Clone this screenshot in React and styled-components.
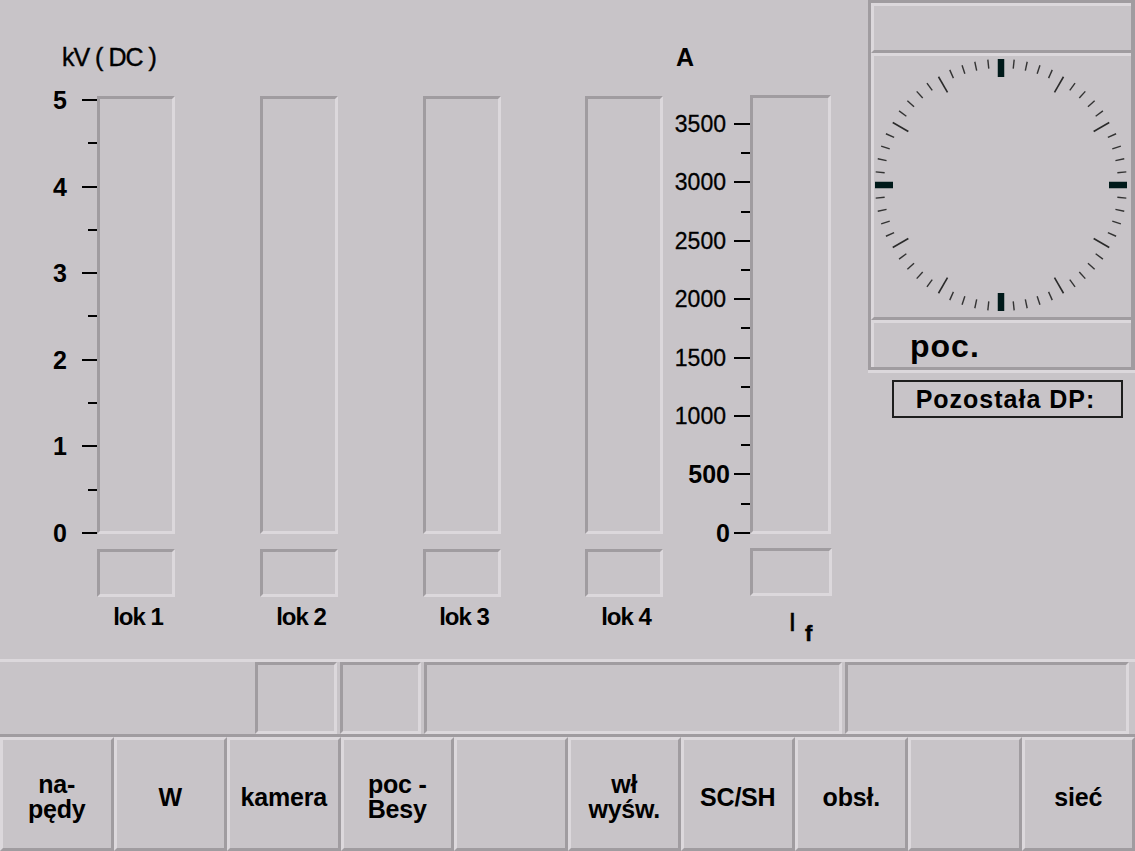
import React from "react";
import styled, { createGlobalStyle } from "styled-components";

const BG = "#c8c4c8";
const DARK = "#a09ca0";
const LIGHT = "#dcd8dc";

const Global = createGlobalStyle`
  html, body { margin: 0; padding: 0; background: ${BG}; overflow: hidden; }
  body { font-family: "Liberation Sans", Arial, sans-serif; color: #000; }
  * { box-sizing: border-box; }
`;

const Screen = styled.div`
  width: 1135px;
  height: 851px;
  display: flex;
  flex-direction: column;
  background: ${BG};
`;

const Top = styled.div`
  display: flex;
  height: 659px;
`;

const Charts = styled.div`
  width: 868px;
  padding-top: 44px;
  display: flex;
  flex-direction: column;
`;

const HeaderRow = styled.div`
  display: flex;
  height: 51px;
  padding-left: 62px;
`;

const UnitLabel = styled.div`
  width: ${(p) => p.$width || "auto"};
  font-size: 25px;
  line-height: 26px;
  font-weight: ${(p) => (p.$bold ? 700 : 400)};
  letter-spacing: ${(p) => (p.$bold ? "0" : "-1px")};
  -webkit-text-stroke: ${(p) => (p.$bold ? "0" : "0.4px #000")};
  white-space: pre;
`;

const ChartRow = styled.div`
  display: flex;
  align-items: flex-start;
`;

const Scale = styled.div`
  width: ${(p) => p.$width}px;
  height: ${(p) => p.$height}px;
  margin-top: ${(p) => p.$top}px;
  display: flex;
  flex-direction: column;
  justify-content: space-between;
`;

const TickRow = styled.div`
  height: 0;
  display: flex;
  align-items: center;
  justify-content: flex-end;
`;

const TickLabel = styled.span`
  font-size: ${(p) => (p.$bold ? 25 : 23)}px;
  font-weight: ${(p) => (p.$bold ? 700 : 400)};
  -webkit-text-stroke: ${(p) => (p.$bold ? "0" : "0.3px #000")};
  line-height: 26px;
  margin-right: ${(p) => p.$gap}px;
  white-space: nowrap;
`;

const Tick = styled.span`
  width: ${(p) => p.$w}px;
  height: 2px;
  background: #000;
  flex: none;
`;

const BarColumn = styled.div`
  width: ${(p) => p.$width}px;
  margin-left: ${(p) => p.$ml || 0}px;
  display: flex;
  flex-direction: column;
  align-items: center;
  flex: none;
`;

const Sunken = styled.div`
  border-top: 3px solid ${DARK};
  border-left: 3px solid ${DARK};
  border-right: 3px solid ${LIGHT};
  border-bottom: 3px solid ${LIGHT};
`;

const Bar = styled(Sunken)`
  width: 100%;
  height: ${(p) => p.$h}px;
  margin-top: ${(p) => p.$mt}px;
`;

const ValueBox = styled(Sunken)`
  width: ${(p) => p.$w}px;
  height: 48px;
  margin-top: ${(p) => p.$mt}px;
`;

const BarLabel = styled.div`
  margin-top: 8px;
  margin-left: 4px;
  font-size: 24px;
  line-height: 24px;
  font-weight: 700;
  letter-spacing: -1px;
  white-space: nowrap;
`;

const CurrentLabel = styled.div`
  margin-top: 14px;
  margin-left: 20px;
  font-size: 26px;
  line-height: 24px;
  -webkit-text-stroke: 0.5px #000;
  white-space: nowrap;
`;

const Sub = styled.span`
  font-size: 22px;
  font-weight: 700;
  position: relative;
  top: 10px;
  margin-left: 9px;
`;

const RightPanel = styled.div`
  width: 267px;
  display: flex;
  flex-direction: column;
`;

const Frame = styled.div`
  border-top: 3px solid ${DARK};
  border-left: 3px solid ${DARK};
  border-right: 4px solid ${DARK};
  border-bottom: 3px solid ${DARK};
  box-shadow: 0 3px 0 ${LIGHT};
  display: flex;
  flex-direction: column;
`;

const Cell = styled.div`
  height: ${(p) => p.$h}px;
  border-top: 3px solid ${LIGHT};
  border-left: 3px solid ${LIGHT};
  border-bottom: ${(p) => (p.$last ? "none" : `3px solid ${DARK}`)};
  display: flex;
  align-items: center;
`;

const PocText = styled.div`
  padding-left: 36px;
  padding-top: 2px;
  font-size: 32px;
  line-height: 44px;
  font-weight: 700;
  letter-spacing: 1px;
`;

const RemainBox = styled.div`
  margin-top: 10px;
  margin-left: 24px;
  width: 231px;
  height: 38px;
  border: 2px solid #1e1e1e;
  display: flex;
  align-items: center;
  justify-content: center;
  padding-right: 4px;
  font-size: 25px;
  font-weight: 700;
  letter-spacing: 1px;
  white-space: nowrap;
`;

const StatusRow = styled.div`
  height: 78px;
  border-top: 3px solid ${LIGHT};
  border-bottom: 3px solid ${DARK};
  display: grid;
  grid-template-columns: 252px 82px 81px 418px 284px;
  column-gap: 3px;
`;

const StatusBox = styled(Sunken)`
  height: 72px;
`;

const ButtonRow = styled.div`
  height: 114px;
  display: grid;
  grid-template-columns: repeat(10, 1fr);
`;

const SoftKey = styled.div`
  border-top: 3px solid ${LIGHT};
  border-left: 3px solid ${LIGHT};
  border-right: 3px solid ${DARK};
  border-bottom: 3px solid ${DARK};
  display: flex;
  align-items: center;
  justify-content: center;
  padding-top: 6px;
  text-align: center;
  font-size: 25px;
  line-height: 25px;
  font-weight: 700;
  letter-spacing: -0.2px;
  white-space: pre;
`;

function Dial() {
  const cx = 127;
  const cy = 129;
  const ticks = [];
  for (let i = 0; i < 60; i++) {
    const a = (i * 6 * Math.PI) / 180;
    const s = Math.sin(a);
    const c = -Math.cos(a);
    let r1 = 117;
    let r2 = 126;
    let color = "#333";
    let w = 1.4;
    if (i % 15 === 0) {
      r1 = 108;
      r2 = 126;
      color = "#001a1a";
      w = 6.5;
    } else if (i % 5 === 0) {
      r1 = 107;
      r2 = 125;
      color = "#2a2a2a";
      w = 1.6;
    }
    ticks.push(
      <line
        key={i}
        x1={cx + s * r1}
        y1={cy + c * r1}
        x2={cx + s * r2}
        y2={cy + c * r2}
        stroke={color}
        strokeWidth={w}
      />
    );
  }
  return (
    <svg width="257" height="261" viewBox="0 0 257 261">
      {ticks}
    </svg>
  );
}

const kvTicks = [];
for (let i = 10; i >= 0; i--) {
  kvTicks.push({ major: i % 2 === 0, label: i % 2 === 0 ? String(i / 2) : null });
}

const aTicks = [];
for (let i = 14; i >= 0; i--) {
  aTicks.push({
    major: i % 2 === 0,
    label: i % 2 === 0 ? String((i / 2) * 500) : null,
    bold: i <= 2,
  });
}

const locos = ["lok 1", "lok 2", "lok 3", "lok 4"];
const gaps = [0, 85, 85, 84];

const keys = ["na-\npędy", "W", "kamera", "poc -\nBesy", "", "wł\nwyśw.", "SC/SH", "obsł.", "", "sieć"];

export default function App() {
  return (
    <>
      <Global />
      <Screen>
        <Top>
          <Charts>
            <HeaderRow>
              <UnitLabel $width="614px">kV ( DC )</UnitLabel>
              <UnitLabel $bold>A</UnitLabel>
            </HeaderRow>
            <ChartRow>
              <Scale $width={97} $height={433} $top={5}>
                {kvTicks.map((t, i) => (
                  <TickRow key={i}>
                    {t.label !== null && (
                      <TickLabel $bold $gap={15}>
                        {t.label}
                      </TickLabel>
                    )}
                    <Tick $w={t.major ? 15 : 9} />
                  </TickRow>
                ))}
              </Scale>
              {locos.map((name, i) => (
                <BarColumn key={name} $width={78} $ml={gaps[i]}>
                  <Bar $h={438} $mt={1} />
                  <ValueBox $w={78} $mt={15} />
                  <BarLabel>{name}</BarLabel>
                </BarColumn>
              ))}
              <Scale $width={87} $height={409} $top={29}>
                {aTicks.map((t, i) => (
                  <TickRow key={i}>
                    {t.label !== null && (
                      <TickLabel $bold={t.bold} $gap={t.bold ? 4 : 8}>
                        {t.label}
                      </TickLabel>
                    )}
                    <Tick $w={t.major ? 16 : 9} />
                  </TickRow>
                ))}
              </Scale>
              <BarColumn $width={81}>
                <Bar $h={439} $mt={0} />
                <ValueBox $w={82} $mt={14} />
                <CurrentLabel>
                  I<Sub>f</Sub>
                </CurrentLabel>
              </BarColumn>
            </ChartRow>
          </Charts>
          <RightPanel>
            <Frame>
              <Cell $h={50} />
              <Cell $h={267}>
                <Dial />
              </Cell>
              <Cell $h={47} $last>
                <PocText>poc.</PocText>
              </Cell>
            </Frame>
            <RemainBox>Pozostała DP:</RemainBox>
          </RightPanel>
        </Top>
        <StatusRow>
          <div />
          <StatusBox />
          <StatusBox />
          <StatusBox />
          <StatusBox />
        </StatusRow>
        <ButtonRow>
          {keys.map((k, i) => (
            <SoftKey key={i}>{k}</SoftKey>
          ))}
        </ButtonRow>
      </Screen>
    </>
  );
}
